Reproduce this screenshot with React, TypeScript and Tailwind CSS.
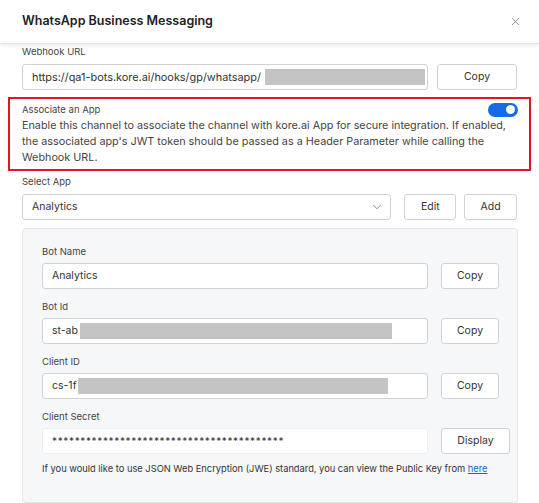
import { ChevronDown, X } from "lucide-react";

const font = "font-['Inter','Noto_Sans',sans-serif]";

const inputBox =
  "flex h-[26px] items-center whitespace-nowrap rounded-[3px] border border-[#cfd3d8] bg-white px-[9px] text-[10.5px] text-[#333]";

const btn =
  "flex h-[26px] items-center justify-center rounded-[3px] border border-[#cfd3d8] bg-white text-[10.5px] text-[#333]";

const label = "h-[12px] text-[9.5px] leading-[12px] text-[#444]";

function Redacted({ width }: { width: number }) {
  return <div className="h-[16px] bg-[#c4c4c4]" style={{ width }} />;
}

type FieldProps = {
  label: string;
  children: React.ReactNode;
  button: string;
  buttonWidth?: string;
  light?: boolean;
};

function Field({ label: text, children, button, buttonWidth = "w-[58px]", light }: FieldProps) {
  return (
    <div className="flex flex-col">
      <div className={label}>{text}</div>
      <div className="mt-[5px] flex gap-[13px]">
        <div className={`${inputBox} w-[386px] ${light ? "border-[#eceef1]" : ""}`}>
          {children}
        </div>
        <button className={`${btn} ${buttonWidth}`}>{button}</button>
      </div>
    </div>
  );
}

export default function App() {
  return (
    <div className={`h-[503px] w-[539px] overflow-hidden bg-white ${font}`}>
      {/* Header */}
      <div className="flex h-[44px] items-center justify-between border-b border-[#e3e5e8] pl-[22px] pr-[17px] shadow-[0_2px_3px_rgba(0,0,0,0.07)]">
        <div className="text-[12.5px] font-semibold text-[#202124]">
          WhatsApp Business Messaging
        </div>
        <X size={13} strokeWidth={1.3} className="text-[#666]" />
      </div>

      {/* Webhook URL */}
      <div className="px-[22px] pt-[2px]">
        <div className={label}>Webhook URL</div>
        <div className="mt-[6px] flex gap-[9px]">
          <div className={`${inputBox} w-[406px]`}>
            <span className="text-[10.9px]">https://qa1-bots.kore.ai/hooks/gp/whatsapp/</span>
            <div className="ml-[4px]">
              <Redacted width={160} />
            </div>
          </div>
          <button className={`${btn} w-[80px]`}>Copy</button>
        </div>
      </div>

      {/* Associate an App */}
      <div className="mx-[8px] mt-[7px] w-[523px] border-2 border-[#e3141f] pb-[3px] pl-[12px] pr-[11px] pt-[3px]">
        <div className="flex h-[15px] items-center justify-between">
          <div className="text-[9.5px] leading-[12px] text-[#444]">Associate an App</div>
          <div className="flex h-[14px] w-[30px] items-center justify-end rounded-full bg-[#1669e8] pr-[3px]">
            <div className="h-[9px] w-[9px] rounded-full bg-white" />
          </div>
        </div>
        <div className="mt-[1px] whitespace-nowrap text-[10.8px] leading-[16px] text-[#444]">
          Enable this channel to associate the channel with kore.ai App for secure integration. If enabled,
          <br />
          the associated app's JWT token should be passed as a Header Parameter while calling the
          <br />
          Webhook URL.
        </div>
      </div>

      {/* Select App */}
      <div className="px-[22px] pt-[5px]">
        <div className={label}>Select App</div>
        <div className="mt-[6px] flex">
          <div className={`${inputBox} w-[371px] justify-between pr-[6px]`}>
            <span>Analytics</span>
            <ChevronDown size={14} strokeWidth={1.3} className="text-[#666]" />
          </div>
          <button className={`${btn} ml-[13px] w-[52px]`}>Edit</button>
          <button className={`${btn} ml-[8px] w-[53px]`}>Add</button>
        </div>
      </div>

      {/* App details */}
      <div className="mx-[22px] mt-[8px] flex h-[275px] w-[496px] flex-col gap-[12px] rounded-[4px] border border-[#e4e6ea] bg-[#f6f7f9] pl-[19px] pt-[17px]">
        <Field label="Bot Name" button="Copy">
          <span>Analytics</span>
        </Field>
        <Field label="Bot Id" button="Copy">
          <span>st-ab</span>
          <div className="ml-[2px]">
            <Redacted width={312} />
          </div>
        </Field>
        <Field label="Client ID" button="Copy">
          <span>cs-1f</span>
          <div className="ml-[1px]">
            <Redacted width={310} />
          </div>
        </Field>
        <div className="flex flex-col">
          <Field label="Client Secret" button="Display" buttonWidth="w-[69px]" light>
            <span className="text-[10px] tracking-[0.65px]">
              *****************************************
            </span>
          </Field>
          <div className="mt-[9px] whitespace-nowrap text-[9.3px] leading-[12px] text-[#333]">
            If you would like to use JSON Web Encryption (JWE) standard, you can view the Public Key from{" "}
            <a className="text-[#1a5fd6] underline">here</a>
          </div>
        </div>
      </div>
    </div>
  );
}
